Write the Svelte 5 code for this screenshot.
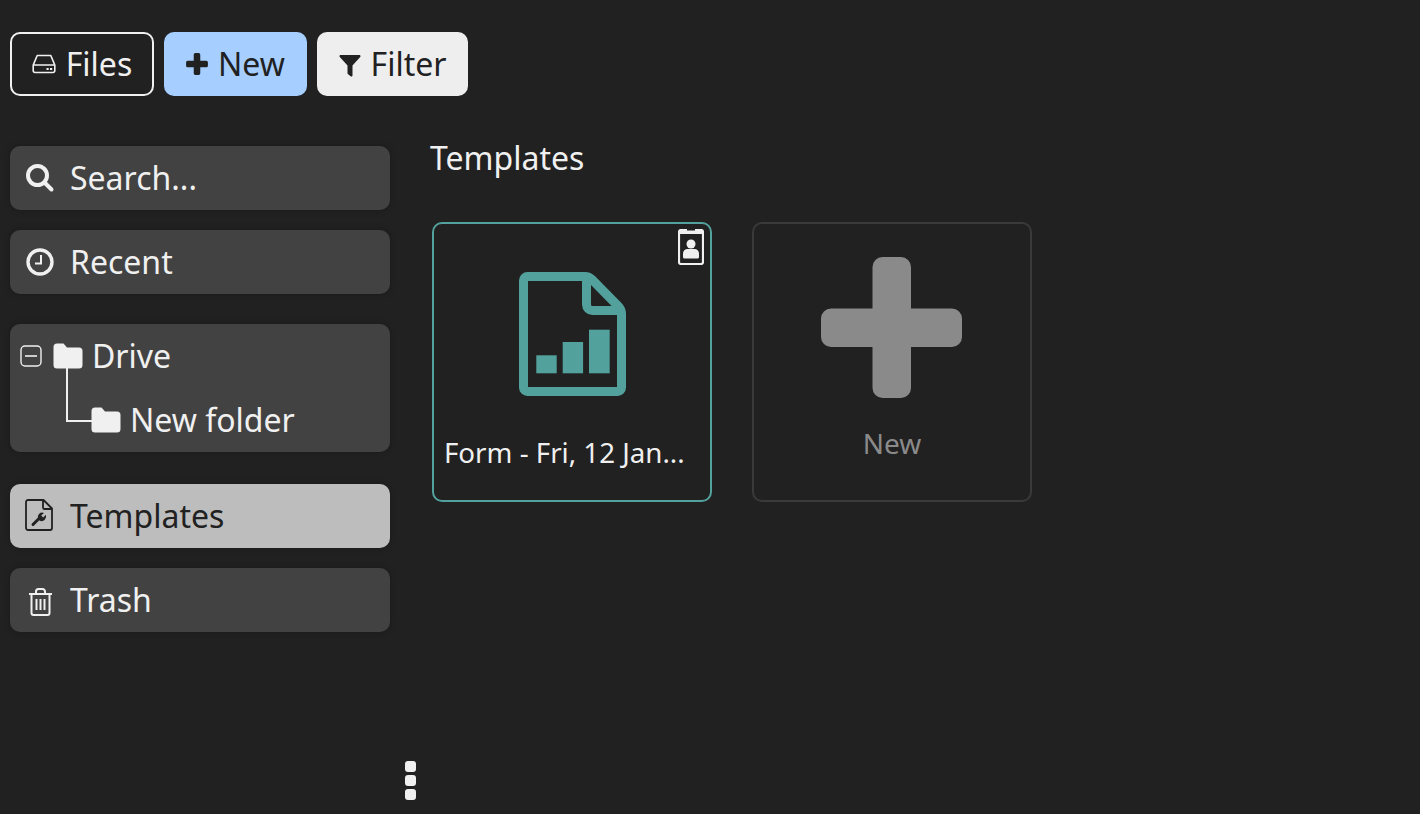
<script lang="ts">
    // Sidebar entries above and below the folder tree share one button style.
    let activeItem = $state("Templates");
</script>

<div class="page">
    <header class="toolbar">
        <button class="tool files">
            <svg class="ico-hdd" viewBox="0 0 24 20" aria-hidden="true">
                <path d="M5.2 1.500h13.600l4 9.600v5.400a2 2 0 0 1-2 2H3.200a2 2 0 0 1-2-2v-5.400z M1.200 11h21.600" fill="none" stroke="currentColor" stroke-width="1.600" stroke-linejoin="round" />
                <rect x="14.500" y="14" width="2.200" height="2" fill="currentColor" />
                <rect x="18" y="14" width="2.200" height="2" fill="currentColor" />
            </svg>
            Files
        </button>
        <button class="tool new">
            <svg class="ico-plus" viewBox="0 0 22 22" aria-hidden="true">
                <path d="M8 2.500a1.500 1.500 0 0 1 1.500-1.500h3A1.500 1.500 0 0 1 14 2.500V8h5.500A1.500 1.500 0 0 1 21 9.500v3a1.500 1.500 0 0 1-1.500 1.500H14v5.500a1.500 1.500 0 0 1-1.500 1.500h-3A1.500 1.500 0 0 1 8 19.500V14H2.500A1.500 1.500 0 0 1 1 12.500v-3A1.500 1.500 0 0 1 2.500 8H8z" fill="currentColor" />
            </svg>
            New
        </button>
        <button class="tool filter">
            <svg class="ico-filter" viewBox="0 0 22 22" aria-hidden="true">
                <path d="M0.500 1.200C0.500 0.500 1 0 1.700 0h18.600c.7 0 1.200.5 1.200 1.200 0 .3-.1.6-.3.800L13.500 10.500v9.800c0 1-1.100 1.600-1.900 1l-2.500-2c-.4-.3-.6-.7-.6-1.100v-7.700L.8 2c-.2-.2-.3-.5-.3-.8z" fill="currentColor" />
            </svg>
            Filter
        </button>
    </header>

    <div class="columns">
        <nav class="sidebar">
            <div class="group">
                <button class="item">
                    <svg class="ico" viewBox="0 0 30 30" aria-hidden="true">
                        <circle cx="12.500" cy="12.500" r="9.500" fill="none" stroke="currentColor" stroke-width="4" />
                        <path d="M19.500 19.500l7 7" stroke="currentColor" stroke-width="4" stroke-linecap="round" />
                    </svg>
                    <span>Search...</span>
                </button>
                <button class="item">
                    <svg class="ico" viewBox="0 0 30 30" aria-hidden="true">
                        <circle cx="15" cy="15" r="12" fill="none" stroke="currentColor" stroke-width="3.400" />
                        <path d="M16 8v8.500H10" fill="none" stroke="currentColor" stroke-width="2" />
                    </svg>
                    <span>Recent</span>
                </button>
            </div>

            <div class="tree">
                <div class="node">
                    <svg class="collapse" viewBox="0 0 22 22" aria-hidden="true">
                        <rect x="1" y="1" width="20" height="20" rx="4" fill="none" stroke="currentColor" stroke-width="1.400" />
                        <path d="M5 11h12" stroke="currentColor" stroke-width="1.600" />
                    </svg>
                    <svg class="folder" viewBox="0 0 30 26" aria-hidden="true">
                        <path d="M0.500 4a3.500 3.500 0 0 1 3.500-3.500h6.500l3.500 4h12a3.500 3.500 0 0 1 3.500 3.500v14a3.500 3.500 0 0 1-3.500 3.500H4A3.500 3.500 0 0 1 .5 22z" fill="currentColor" />
                    </svg>
                    <span>Drive</span>
                </div>
                <div class="node child">
                    <svg class="folder" viewBox="0 0 30 26" aria-hidden="true">
                        <path d="M0.500 4a3.500 3.500 0 0 1 3.500-3.500h6.500l3.500 4h12a3.500 3.500 0 0 1 3.500 3.500v14a3.500 3.500 0 0 1-3.500 3.500H4A3.500 3.500 0 0 1 .5 22z" fill="currentColor" />
                    </svg>
                    <span>New folder</span>
                </div>
            </div>

            <div class="group">
                <button class="item" class:active={activeItem === "Templates"}>
                    <svg class="ico-tpl" viewBox="0 0 28 32" aria-hidden="true">
                        <path d="M3 1h15.500L27 9.500V29a2 2 0 0 1-2 2H3a2 2 0 0 1-2-2V3a2 2 0 0 1 2-2z M18 1.500v7a1.500 1.500 0 0 0 1.500 1.500H26.500" fill="none" stroke="currentColor" stroke-width="1.800" stroke-linejoin="round" />
                        <path d="M8 25.500l6.500-6.500" stroke="currentColor" stroke-width="3" stroke-linecap="round" />
                        <path d="M13 20a4.600 4.600 0 0 1 6-6l-2.800 2.600 2 2 2.600-2.800a4.600 4.600 0 0 1-6 6z" fill="currentColor" />
                    </svg>
                    <span>Templates</span>
                </button>
                <button class="item">
                    <svg class="ico-trash" viewBox="0 0 25 28" aria-hidden="true">
                        <path d="M1 6h23 M8 5.500V3.500A2.500 2.500 0 0 1 10.500 1h4A2.500 2.500 0 0 1 17 3.500v2" fill="none" stroke="currentColor" stroke-width="2" />
                        <path d="M3.500 6v19a2 2 0 0 0 2 2h14a2 2 0 0 0 2-2V6" fill="none" stroke="currentColor" stroke-width="2" />
                        <path d="M8.500 11v11 M12.500 11v11 M16.500 11v11" stroke="currentColor" stroke-width="2" />
                    </svg>
                    <span>Trash</span>
                </button>
            </div>
        </nav>

        <main class="content">
            <h2>Templates</h2>
            <div class="cards">
                <div class="card form">
                    <svg class="badge" viewBox="0 0 26 36" aria-hidden="true">
                        <path d="M3 1h20a2 2 0 0 1 2 2v30a2 2 0 0 1-2 2H3a2 2 0 0 1-2-2V3a2 2 0 0 1 2-2z" fill="none" stroke="currentColor" stroke-width="2.200" />
                        <rect x="1" y="1" width="24" height="4" rx="1.500" fill="currentColor" />
                        <rect x="9" y="0" width="8" height="1.500" fill="#212121" />
                        <circle cx="13" cy="15" r="4.500" fill="currentColor" />
                        <path d="M5 28v-3.500a4.500 4.500 0 0 1 4.500-4.500h7a4.500 4.500 0 0 1 4.500 4.500V28a1.500 1.500 0 0 1-1.500 1.500h-13A1.500 1.500 0 0 1 5 28z" fill="currentColor" />
                    </svg>
                    <svg class="doc" viewBox="0 0 107 124" aria-hidden="true">
                        <path d="M8.500 4.500H66q4 0 7 3L99 34q3.500 3.500 3.500 8v73.500a4 4 0 0 1-4 4H8.500a4 4 0 0 1-4-4V8.500a4 4 0 0 1 4-4z" fill="none" stroke="currentColor" stroke-width="9" stroke-linejoin="round" />
                        <path d="M67.500 5v27.500a6 6 0 0 0 6 6H102" fill="none" stroke="currentColor" stroke-width="9" />
                        <rect x="17.300" y="83.300" width="20.400" height="18" fill="currentColor" />
                        <rect x="43.700" y="70" width="20.400" height="31.300" fill="currentColor" />
                        <rect x="70" y="57.700" width="20.700" height="43.600" fill="currentColor" />
                    </svg>
                    <div class="label">Form - Fri, 12 Jan...</div>
                </div>
                <div class="card add">
                    <svg class="big-plus" viewBox="0 0 142 142" aria-hidden="true">
                        <path d="M51.500 11a10 10 0 0 1 10-10h18.500a10 10 0 0 1 10 10v41.500h41a10 10 0 0 1 10 10v18.500a10 10 0 0 1-10 10h-41v41a10 10 0 0 1-10 10H61.500a10 10 0 0 1-10-10v-41H10a10 10 0 0 1-10-10V62.500a10 10 0 0 1 10-10h41.500z" fill="currentColor" />
                    </svg>
                    <div class="label">New</div>
                </div>
            </div>
        </main>
    </div>

    <div class="grip" aria-hidden="true"><i></i><i></i><i></i></div>
</div>

<style>
    :global(body) {
        background: #212121;
    }
    .page {
        position: relative;
        height: 814px;
        overflow: hidden;
        background: #212121;
        color: #f0f0f0;
        font-family: "Noto Sans", "Open Sans", sans-serif;
        font-size: 32px;
    }
    button {
        font: inherit;
        border: none;
        cursor: pointer;
    }

    .toolbar {
        display: flex;
        gap: 10px;
        padding: 32px 10px 0;
    }
    .tool {
        display: flex;
        align-items: center;
        justify-content: center;
        height: 64px;
        border-radius: 10px;
        line-height: 1;
        box-sizing: border-box;
    }
    .files {
        width: 144px;
        gap: 10px;
        background: #212121;
        color: #f0f0f0;
        border: 2px solid #f0f0f0;
    }
    .new {
        width: 143px;
        gap: 10px;
        background: #a6cfff;
        color: #212121;
    }
    .filter {
        width: 151px;
        gap: 10px;
        background: #eeeeee;
        color: #212121;
    }
    .ico-hdd {
        width: 24px;
        height: 20px;
    }
    .ico-plus {
        width: 24px;
        height: 24px;
        margin-left: -1px;
        margin-right: -1px;
    }
    .ico-filter {
        width: 22px;
        height: 22px;
        margin-top: 3px;
    }

    .columns {
        display: flex;
        padding: 50px 0 0 10px;
    }
    .sidebar {
        display: flex;
        flex-direction: column;
        gap: 30px;
        width: 380px;
    }
    .group {
        display: flex;
        flex-direction: column;
        gap: 20px;
    }
    .item {
        display: flex;
        align-items: center;
        gap: 15px;
        height: 64px;
        padding: 0 15px;
        border-radius: 10px;
        background: #424242;
        color: #f0f0f0;
        box-shadow: 0 0 6px rgba(0, 0, 0, 0.25);
    }
    .item.active {
        background: #bdbdbd;
        color: #212121;
    }
    .item span,
    .node span {
        margin-bottom: 2px;
    }
    .ico {
        width: 30px;
        height: 30px;
        flex: none;
    }
    .ico-tpl {
        width: 28px;
        height: 32px;
        flex: none;
        margin-right: 2px;
        margin-top: -2px;
    }
    .ico-trash {
        width: 25px;
        height: 28px;
        flex: none;
        margin: 3px 2px 0 3px;
    }

    .tree {
        height: 128px;
        margin-bottom: 2px;
        border-radius: 10px;
        background: #424242;
        box-shadow: 0 0 6px rgba(0, 0, 0, 0.25);
    }
    .node {
        position: relative;
        display: flex;
        align-items: center;
        height: 64px;
        padding-left: 10px;
    }
    .collapse {
        width: 22px;
        height: 22px;
        margin-right: 11px;
    }
    .folder {
        width: 30px;
        height: 26px;
        margin-right: 9px;
    }
    .child {
        padding-left: 81px;
    }
    /* elbow from the parent folder down to the child */
    .child::before {
        content: "";
        position: absolute;
        left: 56px;
        top: -20px;
        width: 25px;
        height: 52px;
        border-left: 2px solid #f0f0f0;
        border-bottom: 2px solid #f0f0f0;
    }

    .content {
        padding-left: 40px;
    }
    h2 {
        margin: -6px 0 0;
        font-size: 32px;
        font-weight: 400;
        line-height: 36px;
    }
    .cards {
        display: flex;
        gap: 40px;
        margin: 46px 0 0 2px;
    }
    .card {
        position: relative;
        display: flex;
        flex-direction: column;
        align-items: center;
        width: 280px;
        height: 280px;
        box-sizing: border-box;
        border-radius: 10px;
        font-size: 28px;
    }
    .form {
        border: 2px solid #52a19c;
        color: #52a19c;
    }
    .add {
        border: 2px solid #3a3a3a;
        color: #8a8a8a;
    }
    .badge {
        position: absolute;
        top: 5px;
        right: 6px;
        width: 26px;
        height: 36px;
        color: #f0f0f0;
    }
    .doc {
        width: 107px;
        height: 124px;
        margin-top: 48px;
    }
    .big-plus {
        width: 142px;
        height: 142px;
        margin-top: 32px;
    }
    .form .label {
        width: 100%;
        box-sizing: border-box;
        margin-top: 37px;
        padding-left: 10px;
        color: #f0f0f0;
        font-size: 27.7px;
        line-height: 38px;
        white-space: nowrap;
    }
    .add .label {
        margin-top: 26px;
        line-height: 38px;
    }

    .grip {
        position: absolute;
        left: 405px;
        top: 761px;
        display: flex;
        flex-direction: column;
        gap: 3px;
    }
    .grip i {
        display: block;
        width: 11px;
        height: 11px;
        border-radius: 3px;
        background: #f0f0f0;
    }
</style>
